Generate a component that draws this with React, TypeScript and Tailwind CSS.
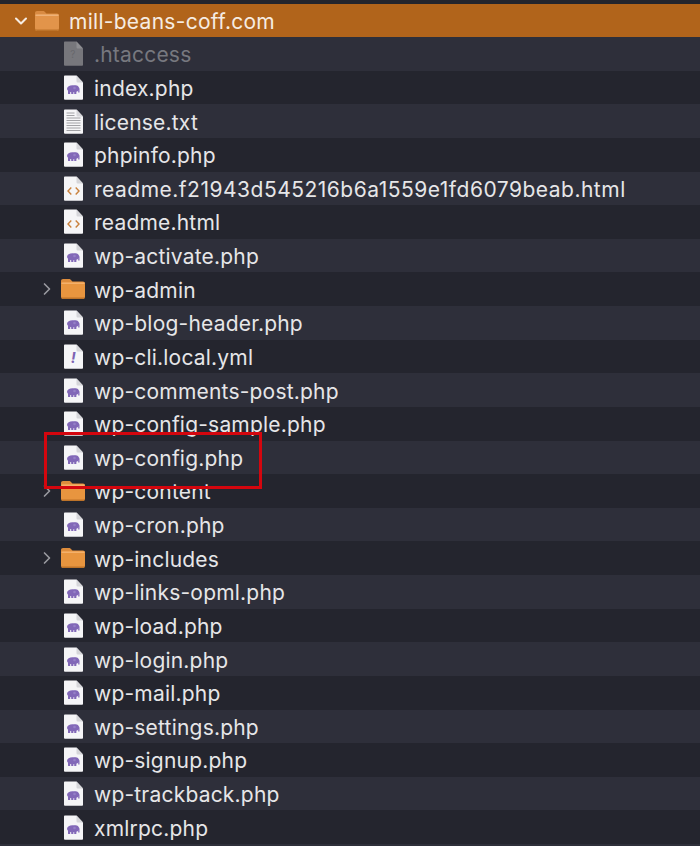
import React from 'react';
import { ChevronDown, ChevronRight } from 'lucide-react';

type Kind = 'php' | 'txt' | 'html' | 'yml' | 'unknown' | 'folder';

const rows: { name: string; kind: Kind }[] = [
  { name: '.htaccess', kind: 'unknown' },
  { name: 'index.php', kind: 'php' },
  { name: 'license.txt', kind: 'txt' },
  { name: 'phpinfo.php', kind: 'php' },
  { name: 'readme.f21943d545216b6a1559e1fd6079beab.html', kind: 'html' },
  { name: 'readme.html', kind: 'html' },
  { name: 'wp-activate.php', kind: 'php' },
  { name: 'wp-admin', kind: 'folder' },
  { name: 'wp-blog-header.php', kind: 'php' },
  { name: 'wp-cli.local.yml', kind: 'yml' },
  { name: 'wp-comments-post.php', kind: 'php' },
  { name: 'wp-config-sample.php', kind: 'php' },
  { name: 'wp-config.php', kind: 'php' },
  { name: 'wp-content', kind: 'folder' },
  { name: 'wp-cron.php', kind: 'php' },
  { name: 'wp-includes', kind: 'folder' },
  { name: 'wp-links-opml.php', kind: 'php' },
  { name: 'wp-load.php', kind: 'php' },
  { name: 'wp-login.php', kind: 'php' },
  { name: 'wp-mail.php', kind: 'php' },
  { name: 'wp-settings.php', kind: 'php' },
  { name: 'wp-signup.php', kind: 'php' },
  { name: 'wp-trackback.php', kind: 'php' },
  { name: 'xmlrpc.php', kind: 'php' },
];

function Folder({ header }: { header?: boolean }) {
  return (
    <svg width="25" height="22" viewBox="0 0 25 22" className="shrink-0">
      <path d="M0 5V3C0 1.800.8 1 2 1h6c1 0 1.500.4 2.200 1.200L11.500 3.500H22c1.200 0 2 .8 2 2V6H0z" fill={header ? '#d98b42' : '#dd8c3c'} />
      <rect x="0" y="4" width="24" height="17" rx="2.500" fill={header ? '#e2944a' : '#e8953f'} />
      <rect x=".5" y="4.500" width="23" height="1.500" fill={header ? '#eeb177' : '#f4b06a'} />
      <path d="M0 18.500C0 20 1 21 2.500 21h19c1.500 0 2.500-1 2.500-2.500v-.5c0 1-.8 1.500-2 1.500H2c-1.200 0-2-.5-2-1.500z" fill="#bd7329" />
    </svg>
  );
}

function Elephant() {
  return (
    <g fill="#8268b8">
      <ellipse cx="9.500" cy="13.800" rx="5.500" ry="3.500" />
      <circle cx="12.500" cy="13.500" r="3.300" />
      <rect x="5" y="15" width="2.200" height="4" rx=".6" />
      <rect x="8.200" y="15" width="2.200" height="4" rx=".6" />
      <rect x="11.200" y="15" width="2.200" height="4" rx=".6" />
      <path d="M14.500 12c1.300 0 2 .8 2 2v3.500h-1.300V15l-1.200-.5z" />
      <circle cx="11.500" cy="13" r="1.300" fill="#9580c6" />
    </g>
  );
}

function FileIcon({ kind }: { kind: Kind }) {
  const paper = kind === 'unknown' ? '#77777c' : '#f5f5f7';
  return (
    <svg width="21" height="25" viewBox="0 0 21 25" className="shrink-0">
      <path d="M1 1.500C1 .8 1.500.5 2 .5h11.500L20 7.500V24c0 .4-.4.700-.8.700H2c-.6 0-1-.3-1-.8z" fill={paper} />
      <path d="M13.500.5V6c0 1 .6 1.500 1.500 1.500h5z" fill={kind === 'unknown' ? '#8e8e92' : '#d6d6da'} />
      {kind === 'php' && <Elephant />}
      {kind === 'html' && (
        <g fill="none" stroke="#c9803c" strokeWidth="1.400">
          <path d="M8.300 11.500L5 15l3.300 3.500" />
          <path d="M12.700 11.500L16 15l-3.300 3.500" />
        </g>
      )}
      {kind === 'yml' && (
        <text x="10.500" y="19" textAnchor="middle" fontSize="15" fontWeight="700" fontStyle="italic" fill="#7d62b3" fontFamily="Inter, sans-serif">!</text>
      )}
      {kind === 'unknown' && (
        <text x="10" y="17" textAnchor="middle" fontSize="10" fill="#68686c" fontFamily="Inter, sans-serif">?</text>
      )}
      {kind === 'txt' && (
        <g stroke="#a2a2a6" strokeWidth="1">
          {[4, 6.500, 9, 11.500, 14, 16.500, 19, 21.500].map((y) => (
            <line key={y} x1="3.500" x2={y < 8 ? 11.500 : 17.500} y1={y} y2={y} />
          ))}
        </g>
      )}
    </svg>
  );
}

export default function App() {
  return (
    <div className="relative w-[700px] h-[846px] overflow-hidden bg-[#2e2f3a] font-['Inter',sans-serif] tracking-[0.2px]">
      <div className="h-1 bg-[#24252d]" />
      <div className="flex items-center h-[33px] bg-[#b1641b] text-[#f6ece2]">
        <ChevronDown className="ml-[11px] w-5 h-5 shrink-0" strokeWidth={2.500} />
        <div className="ml-[4px]"><Folder header /></div>
        <span className="ml-[9px] pt-[2px] text-[21px] leading-none tracking-[0.28px]">mill-beans-coff.com</span>
      </div>
      {rows.map((row, i) => (
        <div
          key={row.name}
          className={`flex items-center h-[33.64px] ${i % 2 === 0 ? 'bg-[#2e2f3a]' : 'bg-[#24252e]'}`}
        >
          <div className="w-[60px] shrink-0 flex items-center justify-end">
            {row.kind === 'folder' && <ChevronRight className="w-5 h-5 mr-[3px] text-[#9a9aa0]" strokeWidth={2} />}
          </div>
          <div className="w-[26px] shrink-0 flex justify-center">
            {row.kind === 'folder' ? <Folder /> : <FileIcon kind={row.kind} />}
          </div>
          <span className={`ml-[8px] pt-[2px] text-[21px] leading-none whitespace-nowrap ${row.kind === 'unknown' ? 'text-[#77787f]' : 'text-[#e6e6e8]'} ${row.name.length > 30 ? 'tracking-[0.5px]' : ''}`}>
            {row.name}
          </span>
        </div>
      ))}
      <div className="absolute left-[44px] top-[432px] w-[218px] h-[57px] border-[3px] border-[#d4060e]" />
    </div>
  );
}
